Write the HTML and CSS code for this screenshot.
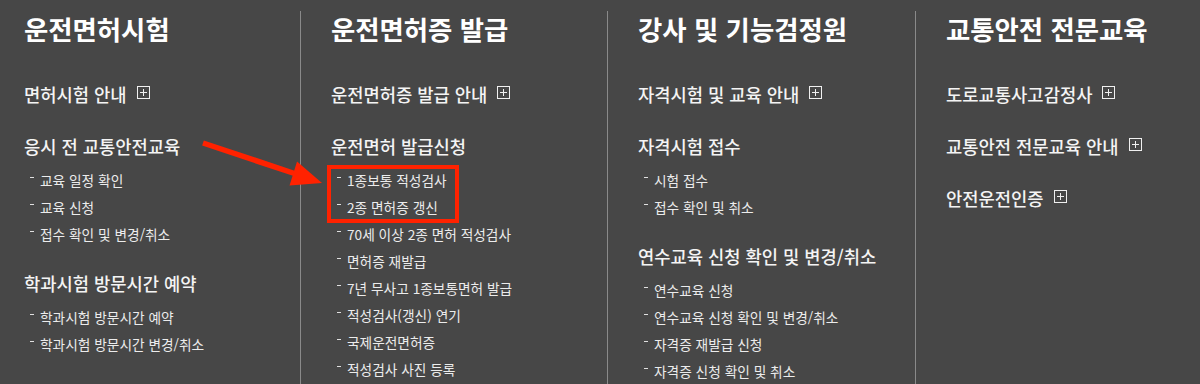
FILE: index.html
```html
<!DOCTYPE html>
<html lang="ko">
<head>
<meta charset="utf-8">
<link rel="stylesheet" href="styles.css">
</head>
<body>
<div class="menu">
  <section class="col col-first">
    <h2>운전면허시험</h2>
    <h3 class="link">면허시험 안내 <span class="plus"></span></h3>
    <h3 class="group">응시 전 교통안전교육</h3>
    <ul>
      <li>교육 일정 확인</li>
      <li>교육 신청</li>
      <li>접수 확인 및 변경/취소</li>
    </ul>
    <h3 class="group">학과시험 방문시간 예약</h3>
    <ul>
      <li>학과시험 방문시간 예약</li>
      <li>학과시험 방문시간 변경/취소</li>
    </ul>
  </section>
  <section class="col">
    <h2>운전면허증 발급</h2>
    <h3 class="link">운전면허증 발급 안내 <span class="plus"></span></h3>
    <h3 class="group">운전면허 발급신청</h3>
    <ul>
      <li>1종보통 적성검사</li>
      <li>2종 면허증 갱신</li>
      <li>70세 이상 2종 면허 적성검사</li>
      <li>면허증 재발급</li>
      <li>7년 무사고 1종보통면허 발급</li>
      <li>적성검사(갱신) 연기</li>
      <li>국제운전면허증</li>
      <li>적성검사 사진 등록</li>
    </ul>
  </section>
  <section class="col">
    <h2>강사 및 기능검정원</h2>
    <h3 class="link">자격시험 및 교육 안내 <span class="plus"></span></h3>
    <h3 class="group">자격시험 접수</h3>
    <ul>
      <li>시험 접수</li>
      <li>접수 확인 및 취소</li>
    </ul>
    <h3 class="group">연수교육 신청 확인 및 변경/취소</h3>
    <ul>
      <li>연수교육 신청</li>
      <li>연수교육 신청 확인 및 변경/취소</li>
      <li>자격증 재발급 신청</li>
      <li>자격증 신청 확인 및 취소</li>
    </ul>
  </section>
  <section class="col">
    <h2>교통안전 전문교육</h2>
    <h3 class="link">도로교통사고감정사 <span class="plus"></span></h3>
    <h3 class="link">교통안전 전문교육 안내 <span class="plus"></span></h3>
    <h3 class="link">안전운전인증 <span class="plus"></span></h3>
  </section>
</div>
<div class="highlight"></div>
<svg class="arrow" width="1200" height="384" viewBox="0 0 1200 384">
  <line x1="203" y1="143" x2="296" y2="174" stroke="#ff2200" stroke-width="5.5"/>
  <polygon points="322,183 297,161.5 289.5,185.5" fill="#ff2200"/>
</svg>
</body>
</html>
```
FILE: styles.css
```css
html, body {
  margin: 0;
  padding: 0;
}
body {
  width: 1200px;
  height: 384px;
  overflow: hidden;
  background: #474747;
  font-family: "Noto Sans CJK KR", "Noto Sans", sans-serif;
  color: #fff;
  position: relative;
}
.menu {
  display: grid;
  grid-template-columns: 300px 307px 308px 285px;
  padding-top: 11px;
  height: 373px;
}
.col {
  border-left: 1px solid #8a8a8a;
  padding-left: 30px;
}
.col-first {
  border-left: none;
  padding-left: 24px;
}
h2 {
  margin: 0;
  font-size: 26.4px;
  line-height: 36px;
  font-weight: 700;
  white-space: nowrap;
}
h3 {
  margin: 0;
  font-size: 17.7px;
  line-height: 24px;
  font-weight: 500;
  color: #f4f4f4;
  white-space: nowrap;
}
h3.link {
  margin-top: 28px;
  display: flex;
  align-items: center;
}
h2 + h3.link {
  margin-top: 35px;
}
h3.group {
  margin-top: 28px;
}
ul + h3.group {
  margin-top: 23px;
}
.plus {
  display: inline-block;
  width: 11px;
  height: 11px;
  border: 1px solid #f0f0f0;
  margin-left: 10px;
  margin-top: -3px;
  position: relative;
}
.plus::before,
.plus::after {
  content: "";
  position: absolute;
  background: #f0f0f0;
}
.plus::before {
  left: 2px;
  right: 2px;
  top: 5px;
  height: 1px;
}
.plus::after {
  top: 2px;
  bottom: 2px;
  left: 5px;
  width: 1px;
}
ul {
  list-style: none;
  margin: 9px 0 0;
  padding: 0 0 0 6px;
}
li {
  position: relative;
  font-size: 13.7px;
  line-height: 27px;
  color: #ececec;
  padding-left: 10px;
  white-space: nowrap;
}
li::before {
  content: "";
  position: absolute;
  left: 0;
  top: 10px;
  width: 4px;
  height: 1px;
  background: #e0e0e0;
}
.highlight {
  position: absolute;
  left: 327px;
  top: 165px;
  width: 124px;
  height: 50px;
  border: 4px solid #ff2200;
}
.arrow {
  position: absolute;
  left: 0;
  top: 0;
  pointer-events: none;
}
```
